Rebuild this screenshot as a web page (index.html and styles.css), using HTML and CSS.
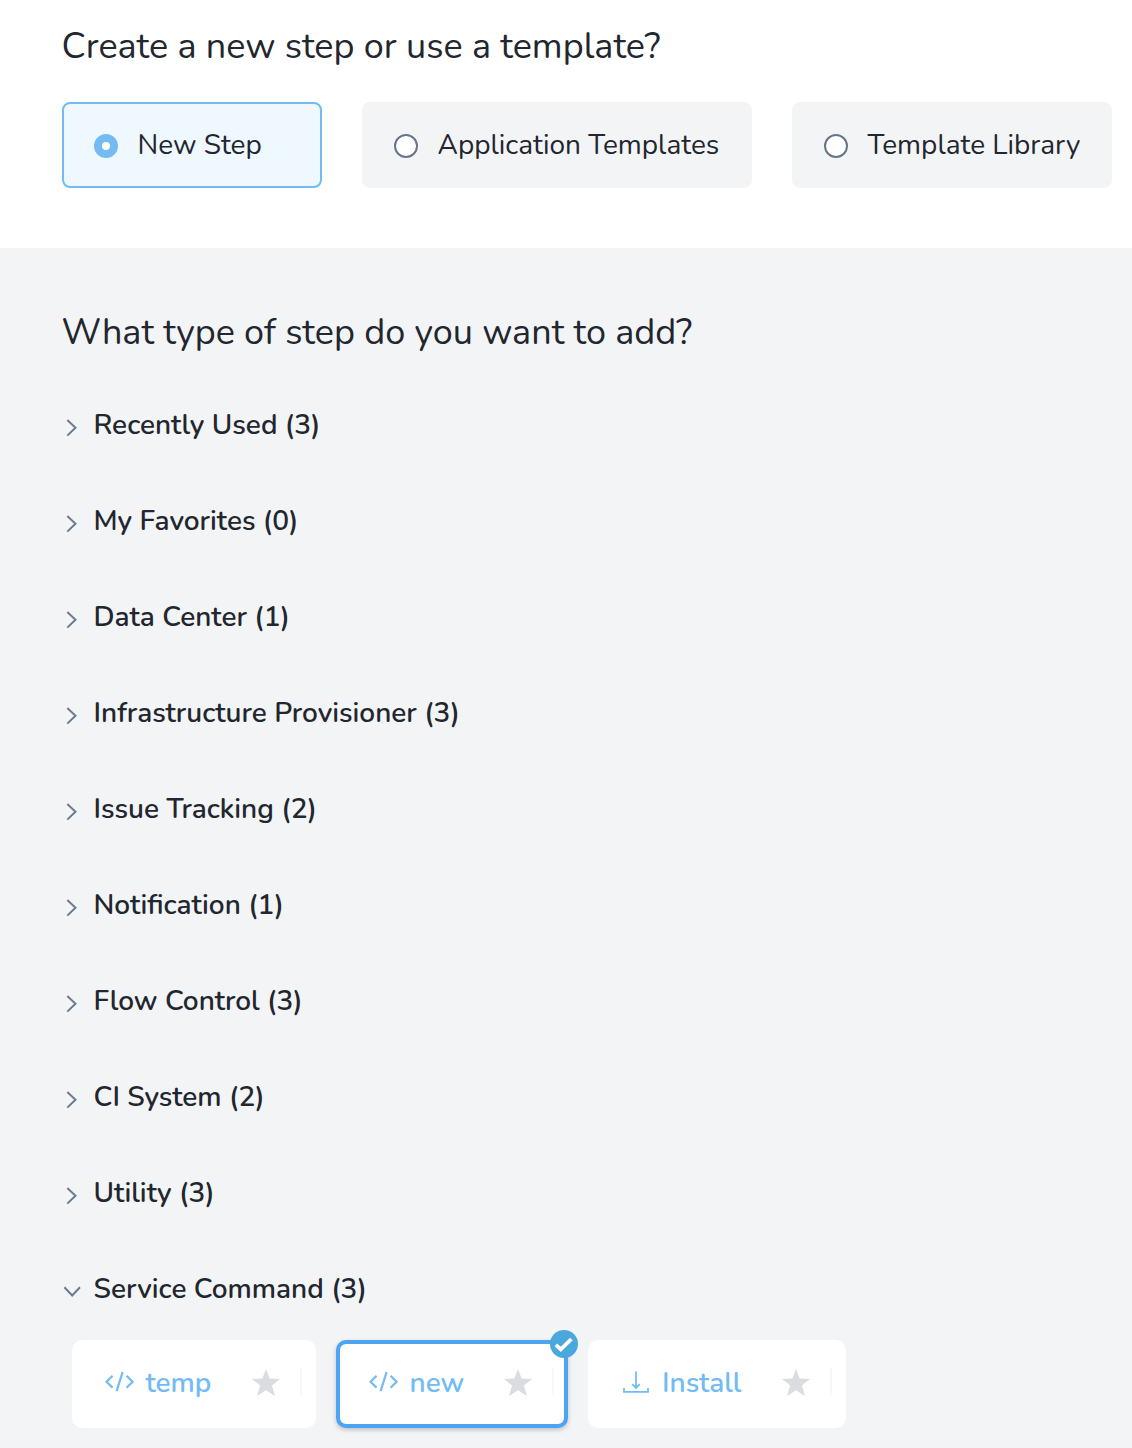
FILE: index.html
```
<!DOCTYPE html>
<html lang="en">
<head>
<meta charset="utf-8">
<title>Add Step</title>
<link rel="stylesheet" href="styles.css">
</head>
<body>
<svg width="0" height="0" class="sprite" aria-hidden="true">
  <symbol id="chevron" viewBox="0 0 12 18"><path d="M1.3 1 9.5 8.8 1.3 16.6" fill="none" stroke="currentColor" stroke-width="2"/></symbol>
  <symbol id="code" viewBox="0 0 30 22"><path d="M7.6 4.8 1.6 10.8l6 6M21.6 4.8l6 6-6 6M17.6 1.2l-6 19" fill="none" stroke="currentColor" stroke-width="2.2"/></symbol>
  <symbol id="install" viewBox="0 0 26 22"><path d="M1 17v3.8h24V17M13 .5v16M9.2 13.2l3.8 3.8 3.8-3.8" fill="none" stroke="currentColor" stroke-width="1.8"/></symbol>
  <symbol id="star" viewBox="0 0 28 27"><path d="M14 0l3.6 9.6 10.4.4-8.1 6.5L23 27l-9-5.8L5 27l3.1-10.5L0 10l10.4-.4z" fill="currentColor"/></symbol>
</svg>

<header class="source">
  <h1 class="title">Create a new step or use a template?</h1>
  <div class="options">
    <label class="option selected"><span class="radio"></span><span class="label">New Step</span></label>
    <label class="option"><span class="radio"></span><span class="label">Application Templates</span></label>
    <label class="option"><span class="radio"></span><span class="label">Template Library</span></label>
  </div>
</header>

<main class="types">
  <h2 class="title">What type of step do you want to add?</h2>
  <div class="category"><svg class="chev"><use href="#chevron"/></svg><span class="name">Recently Used (3)</span></div>
  <div class="category"><svg class="chev"><use href="#chevron"/></svg><span class="name">My Favorites (0)</span></div>
  <div class="category"><svg class="chev"><use href="#chevron"/></svg><span class="name">Data Center (1)</span></div>
  <div class="category"><svg class="chev"><use href="#chevron"/></svg><span class="name">Infrastructure Provisioner (3)</span></div>
  <div class="category"><svg class="chev"><use href="#chevron"/></svg><span class="name">Issue Tracking (2)</span></div>
  <div class="category"><svg class="chev"><use href="#chevron"/></svg><span class="name">Notification (1)</span></div>
  <div class="category"><svg class="chev"><use href="#chevron"/></svg><span class="name">Flow Control (3)</span></div>
  <div class="category"><svg class="chev"><use href="#chevron"/></svg><span class="name">CI System (2)</span></div>
  <div class="category"><svg class="chev"><use href="#chevron"/></svg><span class="name">Utility (3)</span></div>
  <div class="category open"><svg class="chev"><use href="#chevron"/></svg><span class="name">Service Command (3)</span></div>
  <div class="cards">
    <div class="card w-temp"><svg class="code"><use href="#code"/></svg><span class="cmd">temp</span><svg class="star"><use href="#star"/></svg><i class="divider"></i></div>
    <div class="card w-new active"><svg class="code"><use href="#code"/></svg><span class="cmd">new</span><svg class="star"><use href="#star"/></svg><i class="divider"></i>
      <svg class="check" viewBox="0 0 28 28"><circle cx="14" cy="14" r="14" fill="#4aa8dc"/><path d="M5.8 14.8l5 4.6L21.4 9" fill="none" stroke="#fff" stroke-width="3.8"/></svg>
    </div>
    <div class="card w-install"><svg class="install"><use href="#install"/></svg><span class="cmd">Install</span><svg class="star"><use href="#star"/></svg><i class="divider"></i></div>
  </div>
</main>
</body>
</html>
```
FILE: styles.css
```
* { box-sizing: border-box; }
body { margin: 0; background: #f3f4f6; color: #22262e; font-family: Nunito, Lato, sans-serif; width: 1132px; height: 1448px; overflow: hidden; }
.sprite { display: block; height: 0; }
svg { flex: none; }
.title { margin: 0; font-size: 36px; line-height: 44px; font-weight: 400; white-space: nowrap; }
.source { background: #fff; height: 248px; padding: 25px 0 0 61.5px; }
.options { display: flex; gap: 40px; margin: 33px 0 0 .5px; }
.option { display: flex; align-items: center; height: 86px; padding-left: 32px; gap: 19.5px; border-radius: 8px; background: #f3f4f6; width: 390px; }
.option:first-child { width: 260px; }
.option:last-child { width: 320px; }
.option.selected { background: #eff7ff; border: 2px solid #74bbf4; padding-left: 30px; }
.radio { width: 24px; height: 24px; margin-top: 2px; flex: none; border-radius: 50%; border: 2px solid #66758c; background: #fff; }
.selected .radio { border: 8px solid #74bbf4; }
.label { font-size: 28px; line-height: 36px; white-space: nowrap; }
.types { padding: 63px 0 0 62px; }
.types .title { margin: 0 0 20px -.6px; }
.category { display: flex; align-items: center; height: 96px; gap: 15.5px; padding-left: 4px; }
.chev { width: 12px; height: 18px; margin-top: 9px; color: #6b7b92; }
.open .chev { transform: rotate(90deg); }
.name { font-size: 28px; line-height: 36px; margin-top: 4px; font-weight: 600; white-space: nowrap; }
.cards { display: flex; gap: 20px; padding: 5px 0 0 10px; }
.card { position: relative; display: flex; align-items: center; height: 88px; padding: 0 14px 0 33px; border-radius: 10px; background: #fff; color: #73bbf5; }
.w-temp { width: 244px; }
.w-new { width: 232px; }
.w-install { width: 258px; padding-left: 35px; }
.active { border: 4px solid #4fa4f1; padding: 0 10px 0 29px; box-shadow: 0 2px 4px rgba(40, 41, 61, .25); }
.code { width: 30px; height: 22px; margin: -5px 11px 0 -.5px; }
.install { width: 26px; height: 22px; margin: -5px 13.5px 0 -.5px; }
.cmd { font-size: 28px; line-height: 36px; font-weight: 600; margin-bottom: 2px; white-space: nowrap; }
.star { width: 28px; height: 27px; margin: -4px 20px 0 auto; color: #dadcdf; }
.divider { width: 2px; height: 28px; margin-top: -4px; background: #f7f8f9; }
.check { position: absolute; top: -14px; right: -14px; width: 28px; height: 28px; }
```
